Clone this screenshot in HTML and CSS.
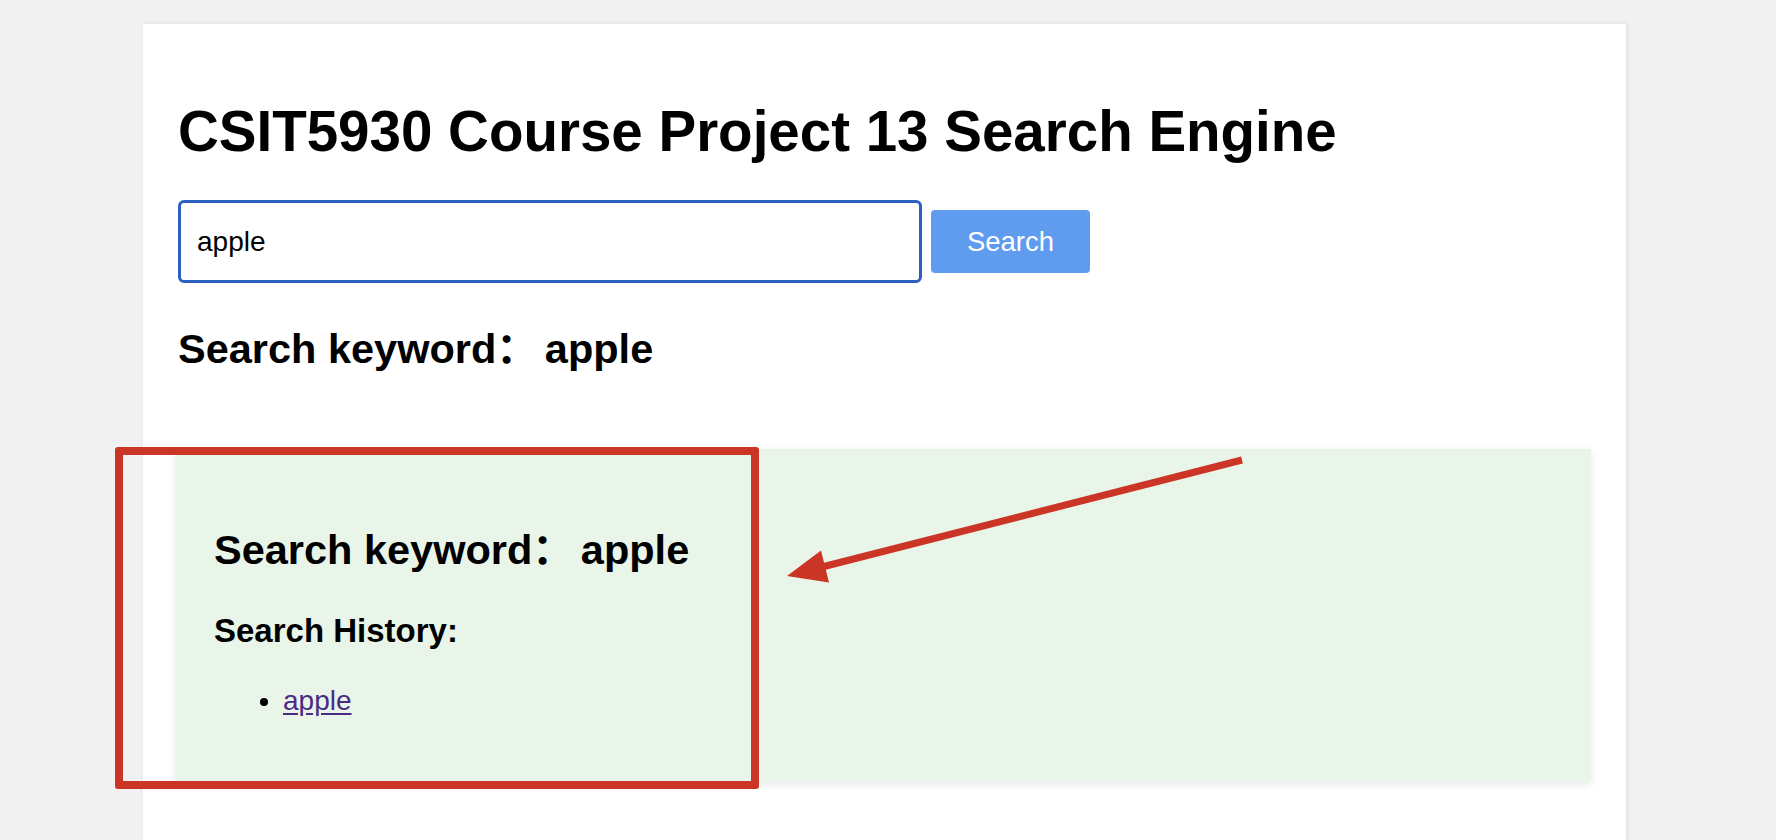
FILE: index.html
```html
<!DOCTYPE html>
<html lang="en">
<head>
<meta charset="utf-8">
<title>CSIT5930 Course Project 13 Search Engine</title>
<link rel="stylesheet" href="styles.css">
</head>
<body>
<div class="page">
  <h1 class="title">CSIT5930 Course Project 13 Search Engine</h1>
  <form class="search-form" onsubmit="return false">
    <input class="search-input" type="text" value="apple">
    <button class="search-btn" type="submit">Search</button>
  </form>
  <h2 class="keyword">Search keyword：<span class="keyword-value">apple</span></h2>
  <section class="history-card">
    <h2 class="keyword card-keyword">Search keyword：<span class="keyword-value">apple</span></h2>
    <h3 class="history-title">Search History:</h3>
    <ul class="history-list">
      <li><a class="history-link" href="#">apple</a></li>
    </ul>
  </section>
</div>
<div class="annot-box"></div>
<svg class="annot-arrow" width="1776" height="840" viewBox="0 0 1776 840" xmlns="http://www.w3.org/2000/svg">
  <line x1="1242" y1="460" x2="818" y2="568" stroke="#cb3525" stroke-width="7"/>
  <polygon points="787,576 821,550.5 829,582.5" fill="#cb3525"/>
</svg>
</body>
</html>
```
FILE: styles.css
```css
html, body {
  margin: 0;
  padding: 0;
}
body {
  background: #f1f1f1;
  font-family: "Liberation Sans", "Noto Sans CJK SC", sans-serif;
  color: #000;
  position: relative;
  width: 1776px;
  height: 840px;
  overflow: hidden;
}
.page {
  box-sizing: border-box;
  width: 1483px;
  min-height: 816px;
  margin: 24px 0 0 143px;
  padding: 35px 35px 40px 35px;
  background: #fff;
  box-shadow: 1px 0 4px rgba(0, 0, 0, 0.09);
  display: flow-root;
}
.title {
  font-size: 56.5px;
  font-weight: bold;
  line-height: 65px;
  margin: 40px 0 36px 0;
}
.search-form {
  display: flex;
  align-items: center;
  gap: 9px;
  margin: 0;
}
.search-input {
  box-sizing: border-box;
  width: 744px;
  height: 83px;
  border: 3px solid #2c5fc1;
  border-radius: 6px;
  padding: 0 16px;
  font-family: "Liberation Sans", sans-serif;
  font-size: 28px;
  color: #000;
  outline: none;
  background: #fff;
}
.search-btn {
  box-sizing: border-box;
  width: 159px;
  height: 63px;
  border: none;
  border-radius: 4px;
  background: #5f9bee;
  color: #fff;
  font-family: "Liberation Sans", sans-serif;
  font-size: 27.5px;
  padding: 0;
}
.keyword {
  font-size: 41.5px;
  font-weight: bold;
  line-height: 48px;
  margin: 42px 0 76px 0;
}
.keyword-value {
  margin-left: 7px;
}
.history-card {
  background: #eaf5ea;
  margin: 0 0 0 -2px;
  padding: 38px 38px 38px 38px;
  box-shadow: 0 3px 8px rgba(0, 0, 0, 0.1);
  display: flow-root;
}
.card-keyword {
  margin: 39px 0 38px 0;
}
.history-title {
  font-size: 33px;
  font-weight: bold;
  line-height: 38px;
  margin: 0 0 35px 0;
}
.history-list {
  margin: 0 0 26px 0;
  padding-left: 69px;
  font-size: 28px;
  line-height: 32px;
}
.history-link {
  color: #4b2a86;
  text-decoration: underline;
  text-underline-offset: 3px;
}
.annot-box {
  position: absolute;
  left: 115px;
  top: 447px;
  width: 644px;
  height: 342px;
  box-sizing: border-box;
  border: 8px solid #cb3525;
  border-radius: 3px;
}
.annot-arrow {
  position: absolute;
  left: 0;
  top: 0;
  pointer-events: none;
}
```
